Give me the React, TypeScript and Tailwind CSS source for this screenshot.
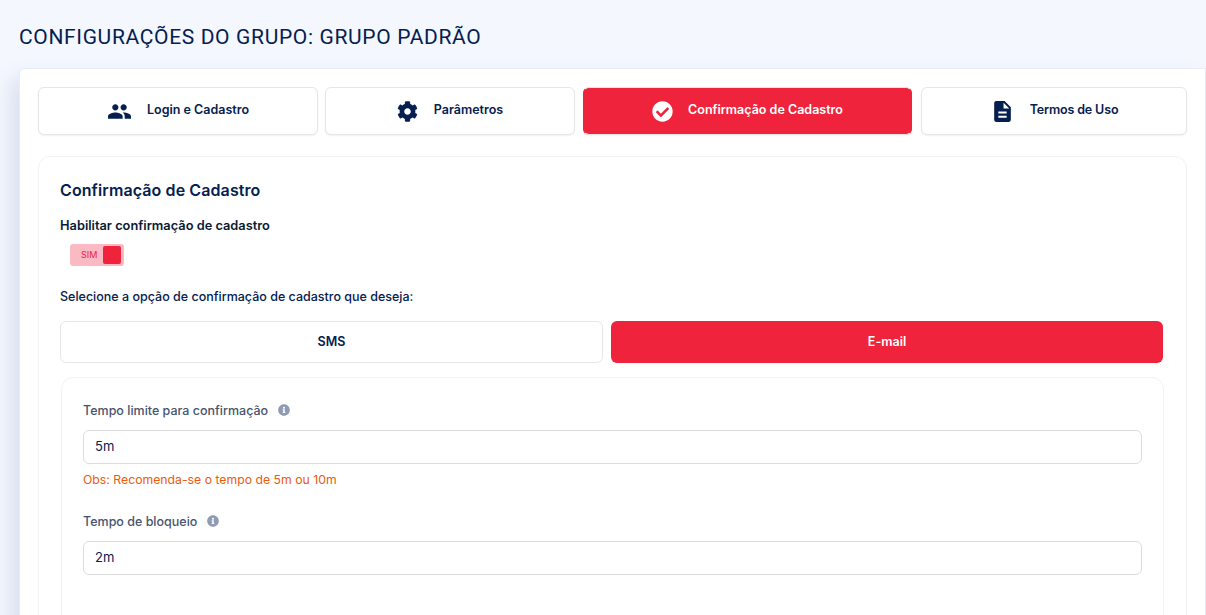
import { FaCheckCircle, FaCog, FaInfoCircle } from 'react-icons/fa'
import { MdDescription, MdPeople } from 'react-icons/md'

const tabs = [
  { label: 'Login e Cadastro', icon: <MdPeople className="text-[25px]" />, width: 'w-[280px]', gap: 'gap-[15px]' },
  { label: 'Parâmetros', icon: <FaCog className="text-[21px]" />, width: 'w-[250px]', gap: 'gap-[16px]', margin: 'ml-[7px]' },
  { label: 'Confirmação de Cadastro', icon: <FaCheckCircle className="text-[21px]" />, width: 'w-[329px]', gap: 'gap-[15px]', margin: 'ml-[8px]', active: true },
  { label: 'Termos de Uso', icon: <MdDescription className="text-[25px]" />, width: 'w-[266px]', gap: 'gap-[15px]', margin: 'ml-[9px]', tight: true },
]

function Label({ text }: { text: string }) {
  return (
    <div className="flex items-center gap-[10px] h-[20px]">
      <span className="text-[12.5px] font-medium text-[#47546f]">{text}</span>
      <FaInfoCircle className="text-[12px] text-[#8f9bb3] -mt-[2px]" />
    </div>
  )
}

function Field({ value }: { value: string }) {
  return (
    <div className="h-[34px] rounded-md border border-[#dcdcdc] bg-white px-[11px] flex items-center text-[13px] text-[#05204f]">
      {value}
    </div>
  )
}

export default function App() {
  return (
    <div className="h-[615px] overflow-hidden bg-[#f4f7fe] pl-[19px] pt-[24px] font-['Inter','Liberation_Sans',sans-serif]">
      <h1 className="h-[27px] text-[21px] leading-[27px] font-normal text-[#05204f] font-['Roboto',sans-serif] tracking-[0.65px]">
        CONFIGURAÇÕES DO GRUPO: GRUPO PADRÃO
      </h1>
      <div className="mt-[17px] h-[600px] rounded-tl-md border border-[#e9ecf3] bg-white pl-[18px] pt-[18px] pr-[18px] shadow-[-8px_10px_20px_rgba(112,128,176,0.2)]">
        <div className="flex">
          {tabs.map((tab) => (
            <div
              key={tab.label}
              className={`h-[48px] flex items-center justify-center ${tab.gap} ${tab.width} ${tab.margin ?? ''} rounded-md border text-[12.5px] font-semibold shadow-[0_1px_2px_rgba(0,0,0,0.06)] ${
                tab.active ? 'bg-[#ef233c] border-x-[#ef233c] border-y-[#e6e6e6] text-white' : 'bg-white border-[#e6e6e6] text-[#05204f]'
              }`}
            >
              {tab.icon}
              <span className={tab.tight ? '-mt-[2px] tracking-[-0.15px]' : '-mt-[2px]'}>{tab.label}</span>
            </div>
          ))}
        </div>

        <div className="mt-[21px] rounded-xl border border-[#f2f2f2] pl-[21px] pr-[22px] pt-[23px] h-[500px]">
          <h2 className="text-[16px] tracking-[0.1px] leading-[20px] font-semibold text-[#05204f]">Confirmação de Cadastro</h2>
          <p className="mt-[18px] text-[12.8px] leading-[16px] font-semibold text-[#0a1a33]">Habilitar confirmação de cadastro</p>
          <div className="mt-[10px] ml-[10px] w-[54px] h-[22px] rounded-[3px] bg-[#fbb9c3] flex items-center justify-between pl-[11px] pr-[3px]">
            <span className="text-[9px] font-normal text-[#ef233c]">SIM</span>
            <span className="w-[18px] h-[18px] rounded-[2px] bg-[#ef233c]" />
          </div>
          <p className="mt-[23px] text-[12.5px] leading-[16px] font-medium text-[#05204f]">Selecione a opção de confirmação de cadastro que deseja:</p>

          <div className="mt-[16px] flex gap-[8px]">
            <div className="w-[543px] h-[42px] rounded-md border border-[#e6e6e6] bg-white flex items-center justify-center text-[12.5px] font-semibold text-[#05204f]">SMS</div>
            <div className="w-[552px] h-[42px] rounded-md bg-[#ef233c] flex items-center justify-center text-[12.5px] font-semibold text-white">E-mail</div>
          </div>

          <div className="mt-[14px] ml-[1px] rounded-xl border border-[#f2f2f2] px-[21px] pt-[23px] h-[300px]">
            <Label text="Tempo limite para confirmação" />
            <div className="mt-[9px]">
              <Field value="5m" />
            </div>
            <p className="mt-[8px] text-[12.25px] leading-[16px] text-[#ea5b0c]">Obs: Recomenda-se o tempo de 5m ou 10m</p>
            <div className="mt-[24px]">
              <Label text="Tempo de bloqueio" />
            </div>
            <div className="mt-[9px]">
              <Field value="2m" />
            </div>
          </div>
        </div>
      </div>
    </div>
  )
}
